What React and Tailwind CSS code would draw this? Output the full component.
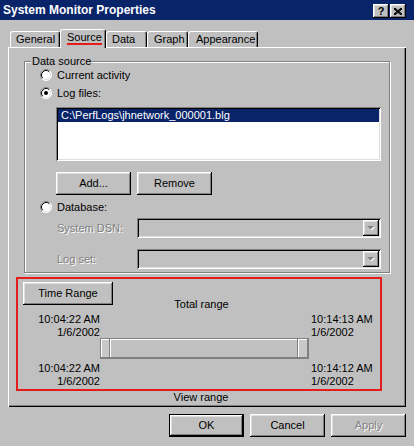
import React from "react";

const raised =
  "shadow-[inset_-1px_-1px_0_#000,inset_1px_1px_0_#fff,inset_-2px_-2px_0_#808080,inset_2px_2px_0_#dfdfdf]";
const raisedSoft =
  "shadow-[inset_-1px_-1px_0_#808080,inset_1px_1px_0_#fff]";
const sunken =
  "shadow-[inset_1px_1px_0_#808080,inset_-1px_-1px_0_#fff,inset_2px_2px_0_#000,inset_-2px_-2px_0_#dfdfdf]";
const disabled = "text-[#808080] [text-shadow:1px_1px_0_#fff]";

function Radio({ checked }) {
  return (
    <svg width="12" height="12" viewBox="0 0 12 12" className="shrink-0">
      <circle cx="6" cy="6" r="5.5" fill="#fff" />
      <path d="M2.11 9.89 A5.5 5.5 0 0 1 9.89 2.11" stroke="#808080" strokeWidth="1" fill="none" />
      <path d="M9.89 2.11 A5.5 5.5 0 0 1 2.11 9.89" stroke="#fff" strokeWidth="1" fill="none" />
      <path d="M2.82 9.18 A4.5 4.5 0 0 1 9.18 2.82" stroke="#000" strokeWidth="1" fill="none" />
      <path d="M9.18 2.82 A4.5 4.5 0 0 1 2.82 9.18" stroke="#dfdfdf" strokeWidth="1" fill="none" />
      {checked && <circle cx="6" cy="6" r="2" fill="#000" />}
    </svg>
  );
}

function Btn({ children, cls = "", dis = false }) {
  return (
    <div
      className={`w-[75px] h-[23px] flex items-center justify-center bg-[#c0c0c0] ${raised} ${cls} ${
        dis ? disabled : "text-black"
      }`}
    >
      {children}
    </div>
  );
}

function Combo() {
  return (
    <div className={`w-[244px] h-[20px] flex justify-end p-[2px] bg-[#c0c0c0] ${sunken}`}>
      <div className={`w-[16px] h-full flex items-center justify-center ${raised}`}>
        <svg width="8" height="5" viewBox="0 0 8 5">
          <polygon points="1,1 8,1 4.5,4.5" fill="#fff" />
          <polygon points="0,0 7,0 3.5,3.5" fill="#808080" />
        </svg>
      </div>
    </div>
  );
}

const tabs = [
  { label: "General", cls: "w-[50px] pl-[5px]" },
  { label: "Source", cls: "w-[46px] pl-[6px]", sel: true },
  { label: "Data", cls: "w-[41px] pl-[5px]" },
  { label: "Graph", cls: "w-[41px] pl-[6px]" },
  { label: "Appearance", cls: "w-[70px] pl-[7px]" },
];

export default function App() {
  return (
    <div
      className="w-[414px] h-[446px] bg-[#c0c0c0] flex flex-col text-[11px] leading-[13px] text-black overflow-hidden"
      style={{ fontFamily: '"Liberation Sans", Arial, sans-serif' }}
    >
      {/* Title bar */}
      <div className="h-[20px] shrink-0 bg-[#0a246a] flex items-center justify-between pl-[3px] pr-[8px]">
        <span className="text-white font-bold text-[12px] leading-[14px]">System Monitor Properties</span>
        <div className="flex gap-[1px] self-end pb-[2px]">
          <div className={`w-[16px] h-[14px] bg-[#c0c0c0] flex items-center justify-center font-bold text-[11px] leading-[11px] ${raised}`}>
            ?
          </div>
          <div className={`w-[16px] h-[14px] bg-[#c0c0c0] flex items-center justify-center ${raised}`}>
            <svg width="8" height="7" viewBox="0 0 8 7">
              <path d="M0 0 L8 7 M1 0 L8 6 M0 1 L7 7 M8 0 L0 7 M7 0 L0 6 M8 1 L1 7" stroke="#000" strokeWidth="1" />
            </svg>
          </div>
        </div>
      </div>

      {/* Tabs */}
      <div className="h-[27px] shrink-0 flex items-end pl-[10px]">
        {tabs.map((t) =>
          t.sel ? (
            <div
              key={t.label}
              className={`${t.cls} h-[19px] -mb-px relative z-10 bg-[#c0c0c0] border-l border-t border-white border-r border-r-black rounded-t-[3px] shadow-[inset_-1px_0_0_#808080] flex items-start pt-[2px]`}
            >
              <span className="leading-[11px] border-b-2 border-[#e41c1c]">{t.label}</span>
            </div>
          ) : (
            <div
              key={t.label}
              className={`${t.cls} h-[16px] border-l border-t border-white border-r border-r-black rounded-t-[3px] shadow-[inset_-1px_0_0_#808080] flex items-start pt-[1px]`}
            >
              {t.label}
            </div>
          )
        )}
      </div>

      {/* Panel */}
      <div
        className={`mx-[8px] h-[360px] shrink-0 relative pl-[8px] pt-[14px] shadow-[inset_1px_1px_0_#fff,inset_-1px_-1px_0_#000,inset_-2px_-2px_0_#808080]`}
      >
        {/* Data source group */}
        <div className="ml-[8px] w-[366px] h-[212px] relative border border-[#808080] shadow-[inset_1px_1px_0_#fff,1px_1px_0_#fff] pl-[15px] pt-[5px] flex flex-col">
          <span className="absolute -top-[7px] left-[6px] px-[1px] bg-[#c0c0c0]">Data source</span>
          <div className="h-[16px] flex items-center gap-[5px]">
            <Radio />
            <span>Current activity</span>
          </div>
          <div className="h-[16px] mt-[2px] flex items-center gap-[5px]">
            <Radio checked />
            <span>Log files:</span>
          </div>
          <div className={`ml-[16px] mt-[6px] w-[325px] h-[54px] bg-white p-[2px] ${sunken}`}>
            <div className="h-[13px] bg-[#0a246a] text-white pl-[3px] leading-[13px]">
              C:\PerfLogs\jhnetwork_000001.blg
            </div>
          </div>
          <div className="ml-[16px] mt-[11px] flex gap-[6px]">
            <Btn>Add...</Btn>
            <Btn>Remove</Btn>
          </div>
          <div className="h-[16px] mt-[4px] flex items-center gap-[5px]">
            <Radio />
            <span>Database:</span>
          </div>
          <div className="mt-[3px] flex items-center">
            <span className={`ml-[17px] w-[80px] ${disabled}`}>System DSN:</span>
            <Combo />
          </div>
          <div className="mt-[11px] flex items-center">
            <span className={`ml-[17px] w-[80px] ${disabled}`}>Log set:</span>
            <Combo />
          </div>
        </div>

        {/* Time range (highlighted) */}
        <div className="mt-[4px] w-[366px] h-[114px] border-2 border-[#e41c1c] pl-[3px] pt-[3px] flex flex-col">
          <div className="pl-[2px]">
            <div className={`w-[90px] h-[23px] flex items-center justify-center ${raised}`}>Time Range</div>
          </div>
          <div className="-mt-[7px] leading-[12px] text-center pl-[2px]">Total range</div>
          <div className="mt-[3px] grid grid-cols-[79px_209px_1fr]">
            <div className="text-right">
              <div>10:04:22 AM</div>
              <div>1/6/2002</div>
            </div>
            <div />
            <div className="pl-[2px]">
              <div>10:14:13 AM</div>
              <div>1/6/2002</div>
            </div>
          </div>
          <div className="-mt-[1px] pl-[79px]">
            <div className="w-[209px] h-[21px] flex border border-[#808080]">
              <div className={`w-[9px] h-full bg-[#c8c8c8] ${raisedSoft}`} />
              <div className={`flex-1 h-full bg-[#c0c0c0] ${raisedSoft}`} />
              <div className={`w-[10px] h-full bg-[#c8c8c8] ${raisedSoft}`} />
            </div>
          </div>
          <div className="mt-[3px] grid grid-cols-[79px_209px_1fr]">
            <div className="text-right">
              <div>10:04:22 AM</div>
              <div>1/6/2002</div>
            </div>
            <div />
            <div className="pl-[2px]">
              <div>10:14:12 AM</div>
              <div>1/6/2002</div>
            </div>
          </div>
        </div>
        <div className="w-[366px] pl-[4px] text-center leading-[12px]">View range</div>
      </div>

      {/* Dialog buttons */}
      <div className="mt-[7px] flex justify-end gap-[6px] pr-[8px]">
        <Btn cls="border border-black">OK</Btn>
        <Btn>Cancel</Btn>
        <Btn dis>Apply</Btn>
      </div>
    </div>
  );
}
